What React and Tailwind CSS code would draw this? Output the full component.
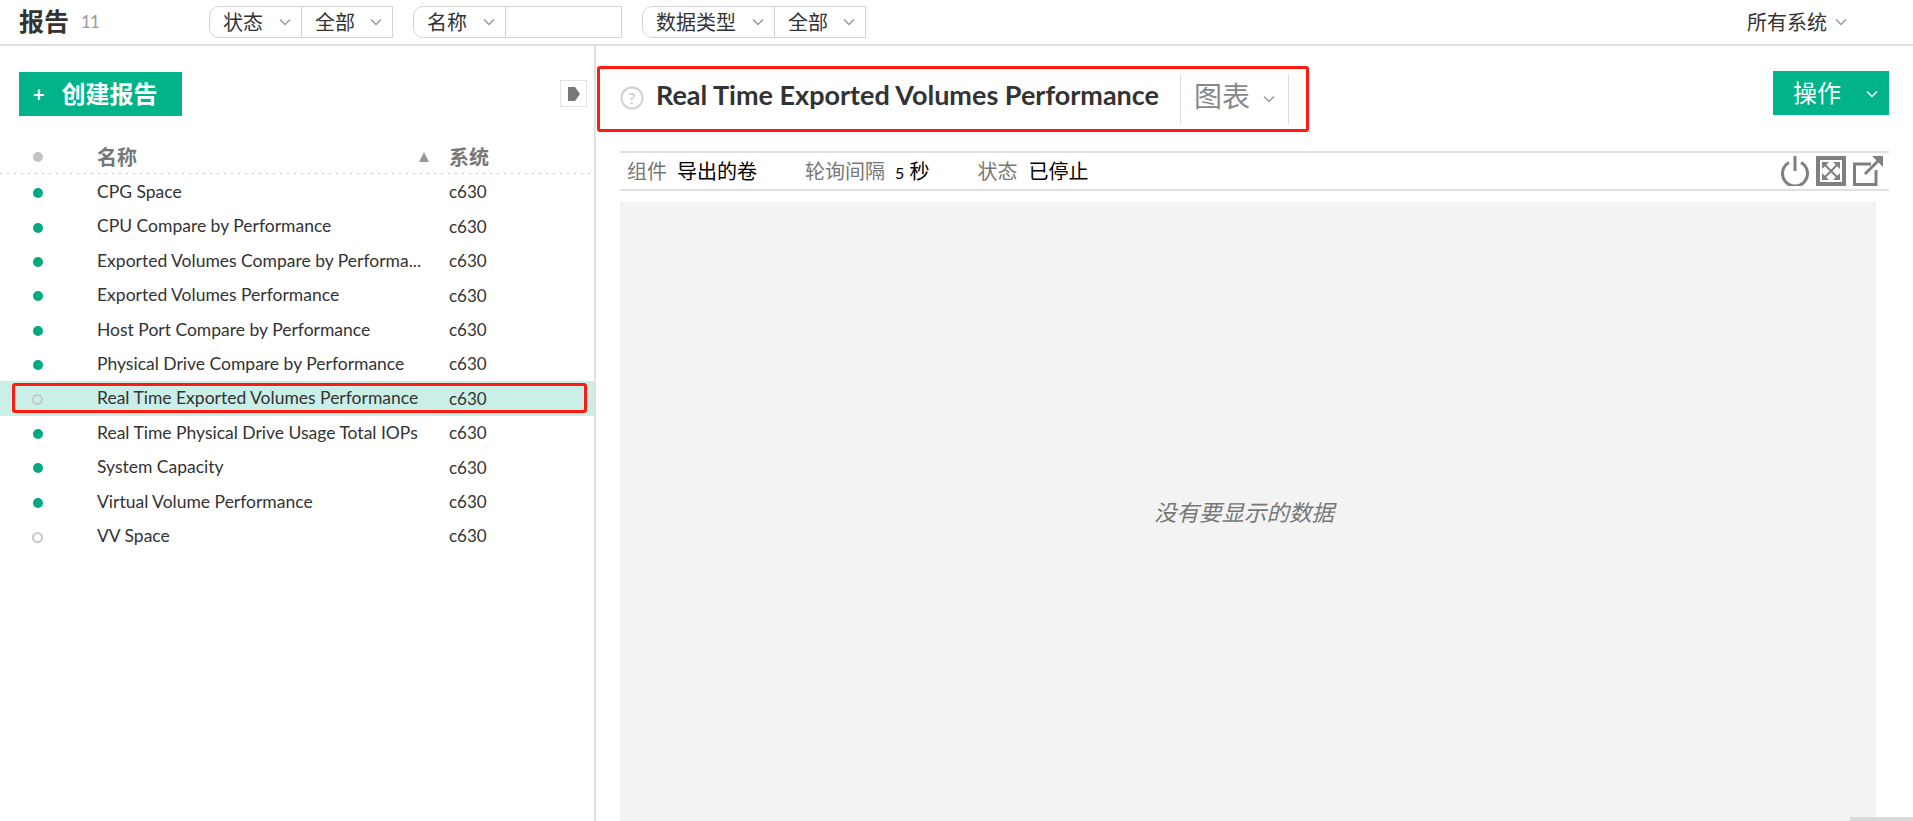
import React from "react";

const FONT = "font-['Lato','Noto_Sans_CJK_SC',sans-serif]";

const reports = [
  { name: "CPG Space", active: true },
  { name: "CPU Compare by Performance", active: true },
  { name: "Exported Volumes Compare by Performa...", active: true },
  { name: "Exported Volumes Performance", active: true },
  { name: "Host Port Compare by Performance", active: true },
  { name: "Physical Drive Compare by Performance", active: true },
  { name: "Real Time Exported Volumes Performance", active: false, selected: true },
  { name: "Real Time Physical Drive Usage Total IOPs", active: true },
  { name: "System Capacity", active: true },
  { name: "Virtual Volume Performance", active: true },
  { name: "VV Space", active: false },
];

const Chevron = ({ className = "", color = "#999999" }) => (
  <svg className={className} width="12" height="8" viewBox="0 0 12 8" fill="none">
    <path d="M1 1.5 L6 6.5 L11 1.5" stroke={color} strokeWidth="1.5" />
  </svg>
);

const FilterCell = ({ label, width, rounded }) => (
  <div
    className={`flex items-center justify-between h-[32px] pl-[13px] pr-[10px] border border-[#d4d4d4] bg-white ${width} ${
      rounded ? "rounded-l-[10px]" : "-ml-px"
    }`}
  >
    <span className="text-[20px] text-[#333333]">{label}</span>
    <Chevron />
  </div>
);

const ReportRow = ({ report }) => (
  <div
    className={`relative flex items-center h-[34.4px] text-[17.5px] text-[#333333] ${
      report.selected ? "bg-[#c9efe6]" : ""
    }`}
  >
    <div className="w-[97px] pl-[32px] shrink-0">
      {report.active ? (
        <div className="ml-px mt-[2px] w-[10px] h-[10px] rounded-full bg-[#01a982]" />
      ) : (
        <div className="mt-[2px] w-[11px] h-[11px] rounded-full border-2 border-[#c8c8c8]" />
      )}
    </div>
    <div className="w-[352px] whitespace-nowrap shrink-0">{report.name}</div>
    <div className="text-[17px]">c630</div>
    {report.selected && (
      <div className="absolute left-[12px] top-[2px] w-[575px] h-[30px] border-[3px] border-[#ff1a12] rounded-[3px]" />
    )}
  </div>
);

export default function App() {
  return (
    <div className={`w-[1913px] h-[821px] overflow-hidden relative bg-white flex flex-col ${FONT}`}>
      {/* top bar */}
      <div className="h-[46px] shrink-0 flex items-center border-b-2 border-[#e0e0e0]">
        <div className="ml-[19px] w-[190px] flex items-center">
          <span className="text-[25px] font-bold text-[#333333]">报告</span>
          <span className="ml-[12px] text-[17px] tracking-[-1px] text-[#999999]">11</span>
        </div>
        <div className="flex">
          <FilterCell label="状态" width="w-[93px]" rounded />
          <FilterCell label="全部" width="w-[92px]" />
        </div>
        <div className="flex ml-[20px]">
          <FilterCell label="名称" width="w-[93px]" rounded />
          <div className="-ml-px w-[117px] h-[32px] border border-[#d4d4d4]" />
        </div>
        <div className="flex ml-[20px]">
          <FilterCell label="数据类型" width="w-[133px]" rounded />
          <FilterCell label="全部" width="w-[92px]" />
        </div>
        <div className="ml-auto mr-[66px] flex items-center gap-[8px]">
          <span className="text-[20px] text-[#333333]">所有系统</span>
          <Chevron />
        </div>
      </div>

      <div className="flex flex-1 min-h-0">
        {/* left panel */}
        <div className="w-[596px] shrink-0 border-r-2 border-[#e0e0e0]">
          <div className="flex items-start justify-between pt-[26px] pl-[19px] pr-[7px]">
            <div className="flex items-center w-[163px] h-[44px] bg-[#00b388] text-white font-bold">
              <span className="ml-[14px] text-[20px]">+</span>
              <span className="ml-[17px] text-[24px]">创建报告</span>
            </div>
            <div className="mt-[8px] w-[27px] h-[27px] border border-[#e3e3e3] flex items-center justify-center">
              <svg width="12" height="14" viewBox="0 0 12 14">
                <path d="M0 0 H7 L12 7 L7 14 H0 Z" fill="#777777" />
              </svg>
            </div>
          </div>
          <div className="flex items-center h-[33px] mt-[24px] text-[20px] font-bold text-[#777777]">
            <div className="w-[97px] pl-[33px] shrink-0">
              <div className="w-[10px] h-[10px] rounded-full bg-[#c4c4c4]" />
            </div>
            <div className="w-[352px] shrink-0 flex items-center justify-between pr-[20px]">
              <span>名称</span>
              <svg width="10" height="10" viewBox="0 0 10 10">
                <path d="M5 0 L10 10 H0 Z" fill="#999999" />
              </svg>
            </div>
            <div>系统</div>
          </div>
          {/* sparse dotted divider */}
          <div className="h-px bg-[repeating-linear-gradient(to_right,#c8c8c8_0,#c8c8c8_2px,transparent_2px,transparent_7px)]" />
          <div className="pt-px">
            {reports.map((report) => (
              <ReportRow key={report.name} report={report} />
            ))}
          </div>
        </div>

        {/* right panel */}
        <div className="flex-1 min-w-0">
          <div className="flex items-start pt-[20px]">
            <div className="ml-px w-[712px] h-[66px] flex items-center border-[3px] border-[#ff1a12] rounded-[3px]">
              <svg className="ml-[20px] shrink-0 -mt-[3px]" width="24" height="24" viewBox="0 0 24 24" fill="none">
                <circle cx="12" cy="12" r="10.5" stroke="#d0d0d0" strokeWidth="2" />
                <text x="12" y="18" textAnchor="middle" fontSize="16" fontWeight="700" fill="#d0d0d0">?</text>
              </svg>
              <span className="ml-[12px] -mt-[7px] text-[27px] font-bold text-[#333333] whitespace-nowrap">
                Real Time Exported Volumes Performance
              </span>
              <div className="ml-[21px] w-[109px] h-[50px] flex items-center border-x border-[#dddddd]">
                <span className="ml-[13px] -mt-[7px] text-[28px] text-[#888888]">图表</span>
                <Chevron className="ml-[13px]" />
              </div>
            </div>
            <div className="ml-auto mr-[24px] mt-[5px] w-[116px] h-[44px] bg-[#00b388] flex items-center text-white">
              <span className="ml-[20px] text-[24px]">操作</span>
              <Chevron className="ml-[25px] mt-[2px]" color="#ffffff" />
            </div>
          </div>

          <div className="ml-[24px] mr-[24px] mt-[19px] h-[40px] flex items-center border-y-2 border-[#e0e0e0] text-[20px]">
            <span className="ml-[7px] text-[#777777]">组件</span>
            <span className="ml-[10px] text-black">导出的卷</span>
            <span className="ml-[48px] text-[#777777]">轮询间隔</span>
            <span className="ml-[10px] text-black">
              <span className="text-[16px]">5</span> 秒
            </span>
            <span className="ml-[48px] text-[#777777]">状态</span>
            <span className="ml-[11px] text-black">已停止</span>
            <div className="ml-auto mr-[6px] flex items-center gap-[7px]">
              <svg width="28" height="30" viewBox="0 0 28 30" fill="none" stroke="#808080" strokeWidth="3">
                <path d="M8 6.5 A12.5 12.5 0 1 0 20 6.5" />
                <path d="M14 0 V15" />
              </svg>
              <svg width="30" height="30" viewBox="0 0 30 30" fill="none">
                <rect x="2" y="2" width="26" height="26" stroke="#808080" strokeWidth="4" />
                <path d="M7 7 L23 23 M23 7 L7 23" stroke="#808080" strokeWidth="2" />
                <path d="M6 6 H13 L6 13 Z M24 6 H17 L24 13 Z M6 24 H13 L6 17 Z M24 24 H17 L24 17 Z" fill="#808080" />
              </svg>
              <svg width="30" height="30" viewBox="0 0 30 30" fill="none">
                <path d="M18 8 H1.5 V28.5 H23 V14" stroke="#808080" strokeWidth="3" />
                <path d="M12 18 L26 4" stroke="#808080" strokeWidth="3" />
                <path d="M19 0 H30 V11 Z" fill="#808080" />
              </svg>
            </div>
          </div>

          <div className="ml-[24px] mt-[11px] w-[1256px] h-[640px] bg-[#f3f3f3] flex items-center justify-center pb-[18px] pr-[8px]">
            <span className="text-[22.5px] italic text-[#777777]">没有要显示的数据</span>
          </div>
        </div>
      </div>

      {/* scrollbar sliver at the bottom edge */}
      <div className="absolute right-0 bottom-0 w-[63px] h-[4px] bg-[#d9d9d9]" />
    </div>
  );
}
